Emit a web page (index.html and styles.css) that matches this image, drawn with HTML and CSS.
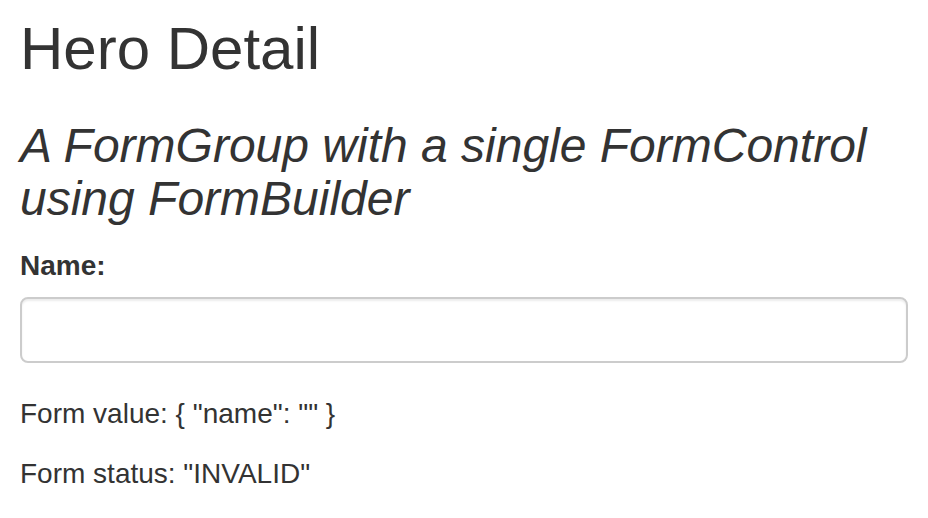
FILE: index.html
```html
<!DOCTYPE html>
<html lang="en">
<head>
<meta charset="utf-8">
<title>Hero Detail</title>
<link rel="stylesheet" href="styles.css">
</head>
<body>
<div class="page">
  <h2 class="title">Hero Detail</h2>
  <h3 class="subtitle">A FormGroup with a single FormControl using FormBuilder</h3>
  <form class="hero-form">
    <div class="form-group">
      <label class="form-label" for="name">Name:</label>
      <input class="form-control" id="name" type="text">
    </div>
  </form>
  <p class="info">Form value: { "name": "" }</p>
  <p class="info">Form status: "INVALID"</p>
</div>
</body>
</html>
```
FILE: styles.css
```css
html, body {
  margin: 0;
  padding: 0;
  background: #fff;
}
body {
  font-family: "Liberation Sans", Arial, Helvetica, sans-serif;
  font-size: 28px;
  line-height: 40px;
  color: #333;
}
.page {
  padding: 16px 20px 0 20px;
}
.title {
  margin: 0 0 38px 0;
  font-size: 60px;
  line-height: 66px;
  font-weight: 400;
}
.subtitle {
  margin: 0 0 20px 0;
  font-size: 48px;
  line-height: 52.8px;
  font-weight: 400;
  font-style: italic;
}
.hero-form {
  margin: 0;
}
.form-group {
  margin-bottom: 31px;
}
.form-label {
  display: block;
  font-weight: 700;
  margin-bottom: 11px;
}
.form-control {
  display: block;
  box-sizing: border-box;
  width: 100%;
  height: 66px;
  margin: 0;
  padding: 12px 24px;
  font-family: inherit;
  font-size: 28px;
  color: #555;
  background: #fff;
  border: 2px solid #ccc;
  border-radius: 8px;
  box-shadow: inset 0 2px 2px rgba(0, 0, 0, 0.075);
  outline: none;
}
.info {
  margin: 0 0 20px 0;
}
```
